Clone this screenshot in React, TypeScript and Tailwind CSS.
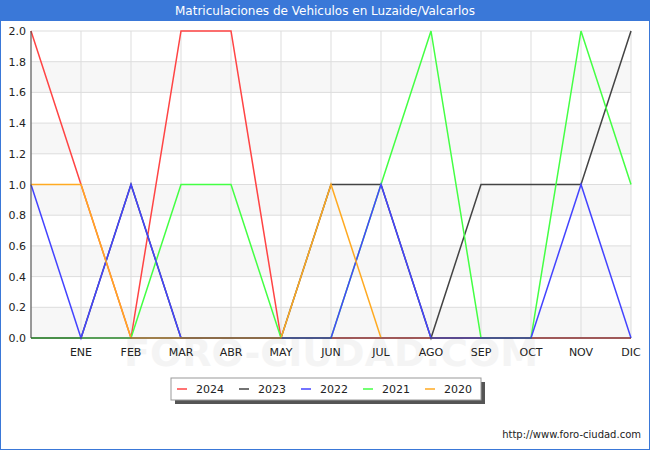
const X = (i: number) => 30 + i * 50;
const Y = (v: number) => 337 - v * 153.5;
const series = [
  { name: "2024", color: "#ff4444", d: [2, 1, 0, 2, 2, 0, 0, 0, 0, 0, 0, 0, 0] },
  { name: "2023", color: "#444444", d: [0, 0, 1, 0, 0, 0, 1, 1, 0, 1, 1, 1, 2] },
  { name: "2021", color: "#44ff44", d: [0, 0, 0, 1, 1, 0, 0, 1, 2, 0, 0, 2, 1] },
  { name: "2022", color: "#4444ff", d: [1, 0, 1, 0, 0, 0, 0, 1, 0, 0, 0, 1, 0] },
  { name: "2020", color: "#ffaa22", d: [1, 1, 0, 0, 0, 0, 1, 0, null, null, null, null, null] },
];
const months = ["", "ENE", "FEB", "MAR", "ABR", "MAY", "JUN", "JUL", "AGO", "SEP", "OCT", "NOV", "DIC"];
const legend = [
  ["2024", "#ff4444"], ["2023", "#444444"], ["2022", "#4444ff"], ["2021", "#44ff44"], ["2020", "#ffaa22"],
];

export default function App() {
  return (
    <div className="w-[650px] h-[450px] bg-white border border-[#3a78d8] flex flex-col" style={{ fontFamily: "'DejaVu Sans', sans-serif" }}>
      <div className="h-[20px] bg-[#3a78d8] text-white text-[12px] flex items-center justify-center">
        Matriculaciones de Vehiculos en Luzaide/Valcarlos
      </div>
      <div className="relative flex-1">
        <svg width="648" height="428" className="absolute left-0 top-0" fontFamily="DejaVu Sans, sans-serif">
          {Array.from({ length: 10 }).map((_, k) =>
            k % 2 === 0 ? <rect key={k} x={30} y={Y((k + 1) * 0.2) - 20} width={600} height={30.7} fill="#f7f7f7" /> : null
          )}
          <text x={330} y={345} fontSize={38} textAnchor="middle" fill="#f4f4f4" fontWeight="bold">FORO-CIUDAD.COM</text>
          {Array.from({ length: 11 }).map((_, k) => (
            <g key={k}>
              <line x1={30} x2={630} y1={Y(k * 0.2) - 20} y2={Y(k * 0.2) - 20} stroke="#dddddd" />
              <text x={25} y={Y(k * 0.2) - 16} fontSize={11} textAnchor="end" fill="#222">{(k * 0.2).toFixed(1)}</text>
            </g>
          ))}
          {months.map((m, i) => (
            <g key={i}>
              <line x1={X(i)} x2={X(i)} y1={10} y2={317} stroke="#dddddd" />
              <text x={X(i)} y={335} fontSize={11} textAnchor="middle" fill="#222">{m}</text>
            </g>
          ))}
          {series.map((s) => {
            const pts = s.d.map((v, i) => (v === null ? null : `${X(i)},${Y(v) - 20}`)).filter(Boolean).join(" ");
            return <polyline key={s.name} points={pts} fill="none" stroke={s.color} strokeWidth={1.5} />;
          })}
          <line x1={30} x2={630} y1={317} y2={317} stroke="#444" />
          <line x1={30} x2={30} y1={10} y2={317} stroke="#444" />
          <rect x={174} y={361} width={310} height={22} fill="#555" />
          <rect x={170} y={357} width={310} height={22} fill="#fff" stroke="#999" />
          {legend.map(([n, c], i) => (
            <g key={n}>
              <line x1={176 + i * 62} x2={186 + i * 62} y1={368} y2={368} stroke={c} strokeWidth={1.5} />
              <text x={195 + i * 62} y={372} fontSize={11} fill="#222">{n}</text>
            </g>
          ))}
          <text x={640} y={417} fontSize={10} textAnchor="end" fill="#222">http://www.foro-ciudad.com</text>
        </svg>
      </div>
    </div>
  );
}
